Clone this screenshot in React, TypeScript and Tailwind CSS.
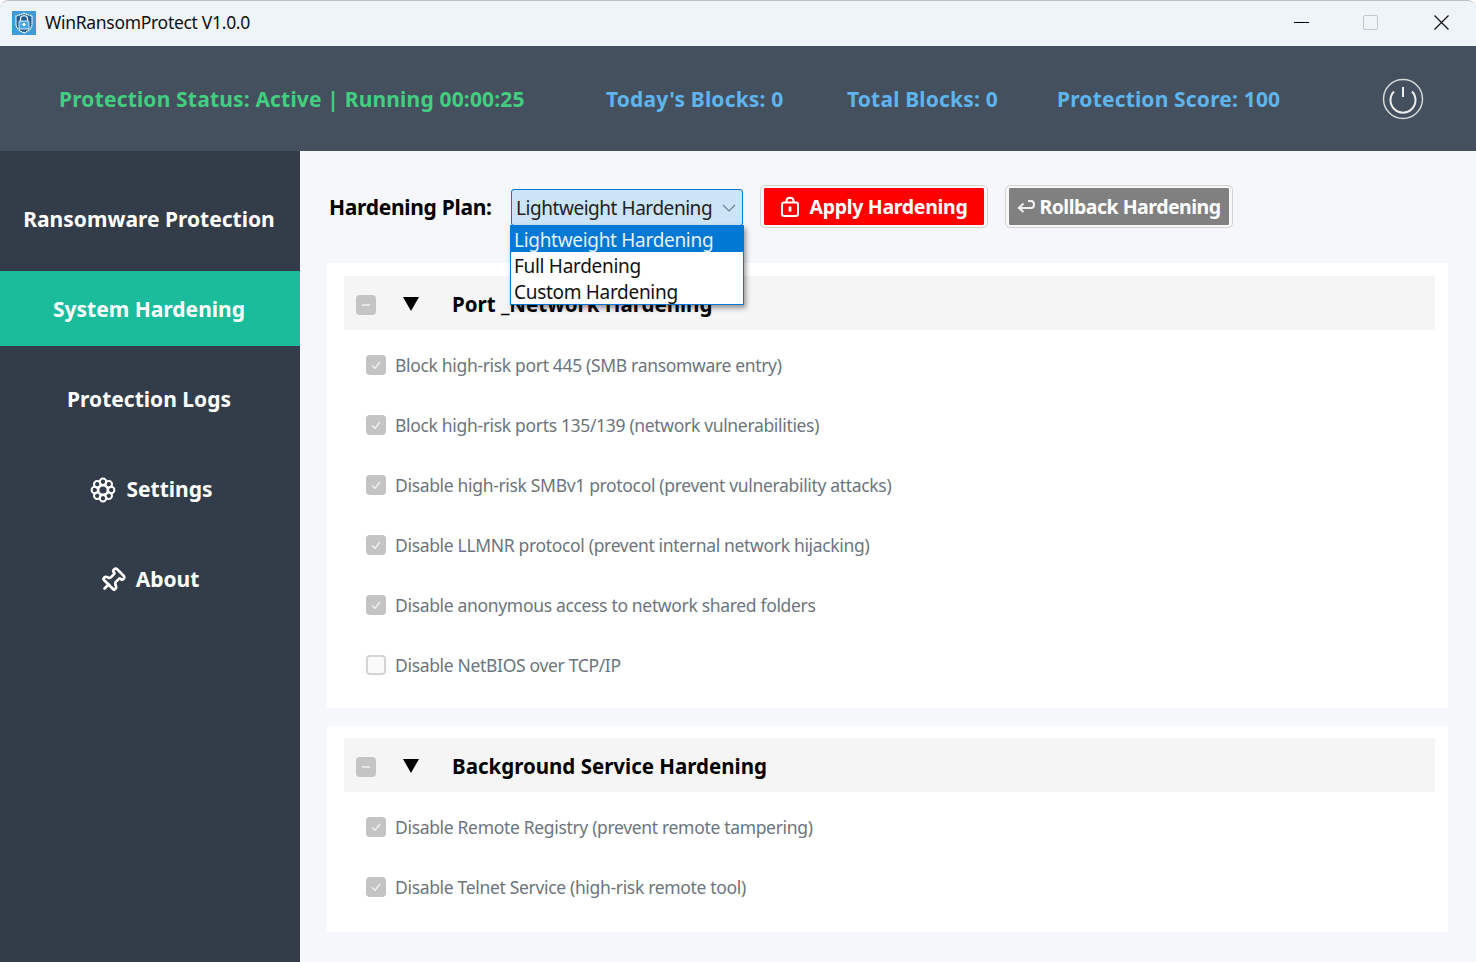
import { Pin } from 'lucide-react';

const font = { fontFamily: '"Noto Sans", "Open Sans", sans-serif' };

const navItems = [
  { label: 'Ransomware Protection' },
  { label: 'System Hardening', active: true },
  { label: 'Protection Logs' },
  { label: 'Settings', icon: 'settings' },
  { label: 'About', icon: 'pin' },
];

const portItems = [
  { label: 'Block high-risk port 445 (SMB ransomware entry)', checked: true },
  { label: 'Block high-risk ports 135/139 (network vulnerabilities)', checked: true },
  { label: 'Disable high-risk SMBv1 protocol (prevent vulnerability attacks)', checked: true },
  { label: 'Disable LLMNR protocol (prevent internal network hijacking)', checked: true },
  { label: 'Disable anonymous access to network shared folders', checked: true },
  { label: 'Disable NetBIOS over TCP/IP', checked: false },
];

const serviceItems = [
  { label: 'Disable Remote Registry (prevent remote tampering)', checked: true },
  { label: 'Disable Telnet Service (high-risk remote tool)', checked: true },
];

function AppLogo() {
  return (
    <svg width="24" height="24" viewBox="0 0 24 24" className="shrink-0">
      <rect width="24" height="24" fill="#3f9bd8" />
      <path d="M12 2.5 L20 5 V13 C20 17.5 16 20 12 22 C8 20 4 17.5 4 13 V5 Z" fill="#1f5f96" stroke="#fff" strokeWidth="1.2" strokeDasharray="1.6 0.5" />
      <path d="M8.5 10 V7.5 C8.5 3.8 15.5 3.8 15.5 7.5 V10" fill="none" stroke="#fff" strokeWidth="1.2" />
      <rect x="7" y="10" width="10" height="8" rx="1" fill="#4aa6e0" stroke="#fff" strokeWidth="0.8" />
      <circle cx="12" cy="13.5" r="1.6" fill="#fff" />
    </svg>
  );
}

// eight petals round a hub, like the gear glyph in the sidebar
function GearIcon() {
  const petals = [0, 45, 90, 135, 180, 225, 270, 315];
  return (
    <svg width="26" height="26" viewBox="0 0 26 26" fill="none" stroke="#fff" strokeWidth="2" className="ml-[5px]">
      {petals.map((a) => (
        <circle key={a} cx="13" cy="4.8" r="3.2" transform={`rotate(${a} 13 13)`} />
      ))}
      <circle cx="13" cy="13" r="4.6" />
    </svg>
  );
}

function LockIcon() {
  return (
    <svg width="20" height="21" viewBox="0 0 20 21" fill="none" stroke="#fff" strokeWidth="2" className="shrink-0">
      <rect x="2" y="6.5" width="16" height="13.5" rx="2" />
      <path d="M6.5 6.5 V5 C6.5 0.6 13.5 0.6 13.5 5 V6.5" />
      <rect x="8.6" y="10.5" width="2.8" height="5" fill="#fff" stroke="none" />
    </svg>
  );
}

function ReturnIcon() {
  return (
    <svg width="18" height="13" viewBox="0 0 18 13" fill="none" stroke="#f0f0f0" strokeWidth="2" className="shrink-0">
      <path d="M11 1 H14 C18 1 18 8 14 8 H2" />
      <path d="M6.5 3.5 L1.8 8 L6.5 12" />
    </svg>
  );
}

function Row({ label, checked }: { label: string; checked: boolean }) {
  return (
    <div className="h-[60px] flex items-center pl-[22px] gap-[9px]">
      {checked ? (
        <span className="w-5 h-5 rounded-[4px] bg-[#c4c4c4] flex items-center justify-center">
          <svg width="12" height="12" viewBox="0 0 12 12">
            <path d="M2 6.5 L5 9.2 L10 3" fill="none" stroke="#f0f0f0" strokeWidth="1.5" />
          </svg>
        </span>
      ) : (
        <span className="w-5 h-5 rounded-[4px] border-2 border-[#d4d4d4] bg-[#fafafa]" />
      )}
      <span className="text-[17.5px] text-[#6c757d] tracking-[-0.33px]">{label}</span>
    </div>
  );
}

function Section({ title, items, className }: { title: string; items: { label: string; checked: boolean }[]; className: string }) {
  return (
    <section className={`bg-white px-[17px] mr-[28px] ml-[27px] ${className}`}>
      <div className="h-[54px] bg-[#f5f5f5] flex items-center pl-3 mr-[-4px]">
        <span className="w-5 h-5 mt-[4px] rounded-[4px] bg-[#c4c4c4] flex items-center justify-center">
          <span className="w-2 h-[2px] bg-[#e6e6e6]" />
        </span>
        <svg width="18" height="16" viewBox="0 0 18 16" className="ml-[26px] mt-[2px]">
          <path d="M1 1 H17 L9 15 Z" fill="#000" />
        </svg>
        <span className="ml-[32px] pt-[2px] text-[20.5px] font-bold text-black">{title}</span>
      </div>
      <div className="pt-[5px]">
        {items.map((item) => (
          <Row key={item.label} label={item.label} checked={item.checked} />
        ))}
      </div>
    </section>
  );
}

export default function App() {
  return (
    <div className="w-[1476px] h-[962px] overflow-hidden flex flex-col bg-[#f5f7fb] rounded-t-[8px]" style={font}>
      {/* Title bar */}
      <div className="h-[46px] shrink-0 bg-[#eff4f9] border-t border-[#bdbdbd] rounded-t-[8px] flex items-center pl-3 pb-[2px]">
        <AppLogo />
        <span className="ml-[9px] text-[17.5px] text-[#111] tracking-[-0.3px]">WinRansomProtect V1.0.0</span>
        <div className="ml-auto flex items-center">
          <span className="w-[15px] h-px bg-black mr-[54px]" />
          <span className="w-[15px] h-[15px] border border-[#c4c6c9] rounded-[2px] mr-[56px]" />
          <svg width="15" height="15" viewBox="0 0 15 15" className="mr-[27px]">
            <path d="M0.5 0.5 L14.5 14.5 M14.5 0.5 L0.5 14.5" stroke="#111" strokeWidth="1.2" />
          </svg>
        </div>
      </div>

      {/* Status bar */}
      <header className="h-[105px] shrink-0 bg-[#44505e] flex items-center text-[21px] font-bold tracking-[0.17px]">
        <span className="ml-[59px] pt-[2px] text-[#43cd80] w-[547px]">Protection Status: Active | Running 00:00:25</span>
        <span className="pt-[2px] text-[#5fb4ec] w-[241px]">Today's Blocks: 0</span>
        <span className="pt-[2px] text-[#5fb4ec] w-[210px]">Total Blocks: 0</span>
        <span className="pt-[2px] text-[#5fb4ec] w-[325px]">Protection Score: 100</span>
        <svg width="42" height="42" viewBox="0 0 42 42">
          <circle cx="21" cy="21" r="19.5" fill="none" stroke="#d6d8da" strokeWidth="1.5" />
          <path d="M12 13.5 A12.5 12.5 0 1 0 30 13.5" fill="none" stroke="#eceded" strokeWidth="2" />
          <path d="M21 9 V19" stroke="#eceded" strokeWidth="2" />
        </svg>
      </header>

      <div className="flex-1 flex min-h-0">
        {/* Sidebar */}
        <nav className="w-[300px] shrink-0 bg-[#333d49] pt-[30px] flex flex-col gap-[15px]">
          {navItems.map((item) => (
            <div
              key={item.label}
              className={`h-[75px] pt-[3px] pr-[2px] flex items-center justify-center gap-[10px] text-[21px] font-bold text-white ${item.active ? 'bg-[#1abc9c]' : ''}`}
            >
              {item.icon === 'settings' && <GearIcon />}
              {item.icon === 'pin' && <Pin size={27} strokeWidth={2.4} className="rotate-45" />}
              {item.label}
            </div>
          ))}
        </nav>

        {/* Main panel */}
        <main className="flex-1 relative min-w-0">
          <div className="h-[112px] flex items-start pl-[29px] pt-[34px]">
            <span className="w-[182px] h-[44px] mt-[1px] flex items-center text-[21px] font-bold text-black tracking-[-0.3px]">Hardening Plan:</span>
            <div className="w-[232px] h-[37px] mt-1 bg-[#cce4f7] border border-[#0078d4] rounded-[3px] flex items-center pl-[4px] pr-[6px] text-[19px] text-[#222] tracking-[-0.45px] whitespace-nowrap">
              <span className="flex-1 pt-[1px]">Lightweight Hardening</span>
              <svg width="14" height="8" viewBox="0 0 14 8"><path d="M1 1 L7 7 L13 1" fill="none" stroke="#6d8195" strokeWidth="1.2" /></svg>
            </div>
            <button className="ml-[18px] mt-[1px] w-[226px] h-[41px] bg-[#ff0000] border-x-[3px] border-y-[2px] border-[#f8f8f8] rounded-[4px] outline outline-1 outline-[#d2d2d2] flex items-center justify-center gap-[9px] text-white text-[19.5px] font-bold tracking-[-0.3px]">
              <LockIcon />
              Apply Hardening
            </button>
            <button className="ml-[19px] mt-[1px] w-[226px] h-[41px] bg-[#808080] border-x-[3px] border-y-[2px] border-[#f8f8f8] rounded-[4px] outline outline-1 outline-[#d2d2d2] flex items-center justify-center gap-[4px] text-white text-[19.5px] font-bold tracking-[-0.5px]">
              <ReturnIcon />
              Rollback Hardening
            </button>
          </div>

          <div className="flex flex-col gap-[18px]">
            <Section title="Port _Network Hardening" items={portItems} className="pt-[13px] pb-[13px]" />
            <Section title="Background Service Hardening" items={serviceItems} className="pt-[12px] pb-[15px]" />
          </div>

          {/* Open dropdown list */}
          <div className="absolute left-[210px] top-[74px] w-[234px] h-[80px] bg-white border border-[#0078d4] shadow-[2px_3px_5px_rgba(0,0,0,0.4)] text-[19px] leading-[28px] text-[#111] tracking-[-0.3px]">
            <div className="h-[26px] bg-[#0078d4] text-[#e4f0fa] pl-[3px]">Lightweight Hardening</div>
            <div className="h-[26px] pl-[3px]">Full Hardening</div>
            <div className="h-[26px] pl-[3px]">Custom Hardening</div>
          </div>
        </main>
      </div>
    </div>
  );
}
